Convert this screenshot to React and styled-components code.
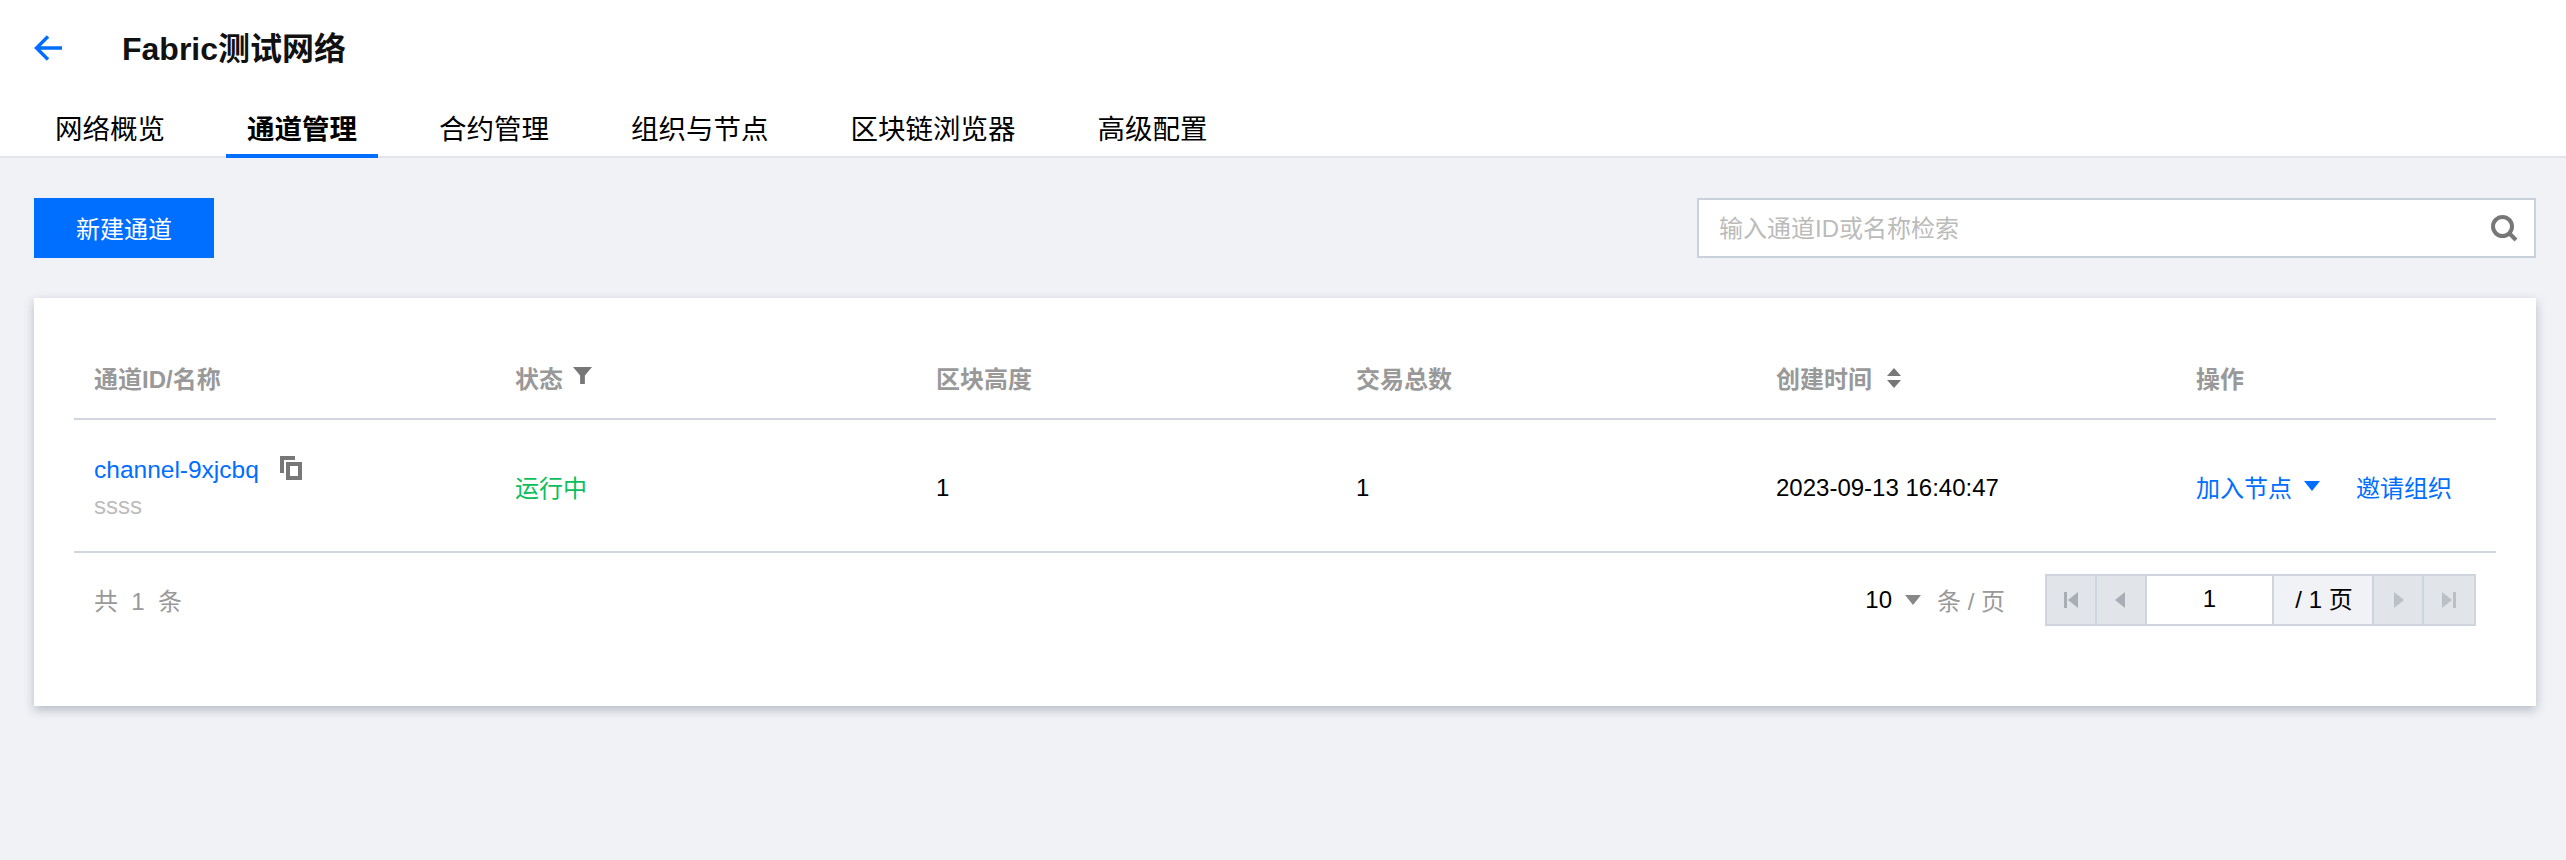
import styled, { createGlobalStyle } from "styled-components";

const GlobalStyle = createGlobalStyle`
  html, body {
    margin: 0;
    padding: 0;
    background: #f0f2f6;
  }
  body {
    font-family: "Liberation Sans", "Noto Sans CJK SC", sans-serif;
    color: #000;
  }
`;

const tabs = ["网络概览", "通道管理", "合约管理", "组织与节点", "区块链浏览器", "高级配置"];

export default function App() {
  return (
    <Page>
      <GlobalStyle />
      <Header>
        <TitleRow>
          <BackIcon viewBox="0 0 28 28" fill="none" stroke="#006eff" strokeWidth="3.4">
            <path d="M28 14H3M14 2.5 2.5 14 14 25.5" />
          </BackIcon>
          <Title>Fabric测试网络</Title>
        </TitleRow>
        <TabBar>
          {tabs.map((t, i) => (
            <Tab key={t} $active={i === 1}>{t}</Tab>
          ))}
        </TabBar>
      </Header>

      <Content>
        <Toolbar>
          <PrimaryButton>新建通道</PrimaryButton>
          <SearchBox>
            <SearchInput placeholder="输入通道ID或名称检索" />
            <SearchIcon viewBox="0 0 28 28" fill="none" stroke="#777" strokeWidth="4">
              <circle cx="12.5" cy="12.5" r="9.5" />
              <path d="m19 19 7 7" />
            </SearchIcon>
          </SearchBox>
        </Toolbar>

        <Card>
          <HeadRow>
            <HeadCell>通道ID/名称</HeadCell>
            <HeadCell>
              状态
              <FilterIcon viewBox="0 0 20 20" fill="#777">
                <path d="M0 1h20l-7.5 9v9h-5v-9z" />
              </FilterIcon>
            </HeadCell>
            <HeadCell>区块高度</HeadCell>
            <HeadCell>交易总数</HeadCell>
            <HeadCell>
              创建时间
              <SortIcon viewBox="0 0 16 20" fill="#777">
                <path d="M8 0l7 8H1zM8 20l-7-8h14z" />
              </SortIcon>
            </HeadCell>
            <HeadCell>操作</HeadCell>
          </HeadRow>

          <BodyRow>
            <Cell>
              <NameLine>
                <ChannelLink>channel-9xjcbq</ChannelLink>
                <CopyIcon viewBox="0 0 22 24" fill="#777">
                  <path d="M0 0h15v4H4v13H0z" />
                  <path fillRule="evenodd" d="M6 6h16v18H6zm4 4v10h8V10z" />
                </CopyIcon>
              </NameLine>
              <SubName>ssss</SubName>
            </Cell>
            <StatusCell><Status>运行中</Status></StatusCell>
            <Cell>1</Cell>
            <Cell>1</Cell>
            <Cell>2023-09-13 16:40:47</Cell>
            <ActionCell>
              <Link>加入节点</Link>
              <Caret viewBox="0 0 16 10" fill="#006eff">
                <path d="M0 0h16L8 10z" />
              </Caret>
              <ActionLink>邀请组织</ActionLink>
            </ActionCell>
          </BodyRow>

          <Footer>
            <Total>共 &nbsp;1 &nbsp;条</Total>
            <PageSize>
              <span>10</span>
              <PageSizeCaret viewBox="0 0 16 10" fill="#888">
                <path d="M0 0h16L8 10z" />
              </PageSizeCaret>
              <PageSizeLabel>条 / 页</PageSizeLabel>
            </PageSize>
            <Pager>
              <PagerButton>
                <PagerIcon viewBox="0 0 14 16" fill="#a9aeb6">
                  <path d="M0 0h3v16H0zM14 0v16L4 8z" />
                </PagerIcon>
              </PagerButton>
              <PagerButton>
                <PagerIcon viewBox="0 0 14 16" fill="#a9aeb6">
                  <path d="M11 0v16L1 8z" />
                </PagerIcon>
              </PagerButton>
              <PagerInput>1</PagerInput>
              <PagerTotal>/ 1 页</PagerTotal>
              <PagerButton>
                <PagerIcon viewBox="0 0 14 16" fill="#bbc0c7">
                  <path d="M3 0v16L13 8z" />
                </PagerIcon>
              </PagerButton>
              <PagerButton $last>
                <PagerIcon viewBox="0 0 14 16" fill="#bbc0c7">
                  <path d="M14 0h-3v16h3zM0 0v16L10 8z" />
                </PagerIcon>
              </PagerButton>
            </Pager>
          </Footer>
        </Card>
      </Content>
    </Page>
  );
}

const Page = styled.div`
  min-height: 860px;
  background: #f0f2f6;
`;

const Header = styled.header`
  background: #fff;
  border-bottom: 2px solid #e2e5ec;
  height: 156px;
`;

const TitleRow = styled.div`
  display: flex;
  align-items: center;
  height: 96px;
  padding-left: 34px;
`;

const BackIcon = styled.svg`
  width: 28px;
  height: 28px;
  flex: none;
`;

const Title = styled.h1`
  margin: -4px 0 0 60px;
  font-size: 32px;
  font-weight: 700;
  color: #111;
`;

const TabBar = styled.nav`
  display: flex;
  height: 62px;
  padding-left: 34px;
  gap: 40px;
`;

const Tab = styled.div`
  padding: 16px 21px 0;
  height: 62px;
  box-sizing: border-box;
  line-height: 36px;
  font-size: 27.5px;
  font-weight: ${(p) => (p.$active ? 700 : 400)};
  color: #000;
  border-bottom: 4px solid ${(p) => (p.$active ? "#006eff" : "transparent")};
`;

const Content = styled.main`
  padding: 40px 30px 0 34px;
`;

const Toolbar = styled.div`
  display: flex;
  justify-content: space-between;
  margin-bottom: 40px;
`;

const PrimaryButton = styled.button`
  width: 180px;
  height: 60px;
  border: 0;
  padding: 0 0 2px;
  background: #006eff;
  color: #fff;
  font: inherit;
  font-size: 24px;
`;

const SearchBox = styled.div`
  position: relative;
  width: 839px;
  height: 60px;
  box-sizing: border-box;
  border: 2px solid #c9d1dc;
  background: #fff;
`;

const SearchInput = styled.input`
  width: 100%;
  height: 100%;
  box-sizing: border-box;
  border: 0;
  outline: 0;
  padding: 2px 60px 0 20px;
  background: transparent;
  font: inherit;
  font-size: 24px;
  &::placeholder {
    color: #bbb;
    opacity: 1;
  }
`;

const SearchIcon = styled.svg`
  position: absolute;
  right: 16px;
  top: 14px;
  width: 28px;
  height: 28px;
`;

const Card = styled.section`
  height: 408px;
  box-sizing: border-box;
  padding: 0 40px;
  background: #fff;
  box-shadow: 0 4px 10px rgba(54, 58, 80, 0.3);
`;

const columns = "421px 421px 420px 420px 420px 319px";

const HeadRow = styled.div`
  display: grid;
  grid-template-columns: ${columns};
  height: 122px;
  box-sizing: border-box;
  border-bottom: 2px solid #cfd5de;
`;

const HeadCell = styled.div`
  display: flex;
  align-items: center;
  padding: 39px 20px 0;
  font-size: 24px;
  font-weight: 700;
  color: #999;
`;

const FilterIcon = styled.svg`
  width: 19px;
  height: 19px;
  margin: -4px 0 0 10px;
`;

const SortIcon = styled.svg`
  width: 16px;
  height: 20px;
  margin: 0 0 0 14px;
`;

const BodyRow = styled.div`
  display: grid;
  grid-template-columns: ${columns};
  height: 133px;
  box-sizing: border-box;
  border-bottom: 2px solid #cfd5de;
`;

const Cell = styled.div`
  display: flex;
  flex-direction: column;
  justify-content: center;
  padding: 4px 20px 0;
  font-size: 24px;
  color: #000;
`;

const StatusCell = styled(Cell)`
  padding-top: 2px;
`;

const ActionCell = styled.div`
  display: flex;
  align-items: center;
  padding: 2px 20px 0;
  font-size: 24px;
`;

const NameLine = styled.div`
  display: flex;
  align-items: center;
`;

const Link = styled.a`
  color: #006eff;
`;

const ChannelLink = styled(Link)`
  font-size: 24.5px;
`;

const ActionLink = styled(Link)`
  margin-left: 36px;
`;

const CopyIcon = styled.svg`
  width: 22px;
  height: 24px;
  margin: -4px 0 0 21px;
`;

const SubName = styled.div`
  margin-top: 8px;
  font-size: 24px;
  color: #bbb;
`;

const Status = styled.span`
  color: #0abf5b;
`;

const Caret = styled.svg`
  width: 16px;
  height: 10px;
  margin: -2px 0 0 12px;
`;

const PageSizeCaret = styled(Caret)`
  margin: 0 0 0 13px;
`;

const Footer = styled.div`
  display: flex;
  align-items: center;
  height: 73px;
  padding: 10px 20px 0;
  box-sizing: content-box;
  font-size: 24px;
`;

const Total = styled.div`
  color: #999;
  flex: 1;
`;

const PageSize = styled.div`
  display: flex;
  align-items: center;
  margin-right: 40px;
`;

const PageSizeLabel = styled.span`
  margin-left: 16px;
  color: #999;
`;

const Pager = styled.div`
  display: flex;
  height: 52px;
  box-sizing: border-box;
  border: 2px solid #cfd5de;
  background: #e1e4e9;
`;

const PagerButton = styled.div`
  display: flex;
  align-items: center;
  justify-content: center;
  width: 50px;
  box-sizing: border-box;
  border-right: ${(p) => (p.$last ? "0" : "2px solid #cfd5de")};
`;

const PagerIcon = styled.svg`
  width: 14px;
  height: 16px;
`;

const PagerInput = styled.div`
  width: 127px;
  box-sizing: border-box;
  border-right: 2px solid #cfd5de;
  background: #fff;
  text-align: center;
  line-height: 46px;
`;

const PagerTotal = styled.div`
  width: 100px;
  box-sizing: border-box;
  border-right: 2px solid #cfd5de;
  background: #f0f2f6;
  text-align: center;
  line-height: 48px;
  padding-left: 2px;
`;
